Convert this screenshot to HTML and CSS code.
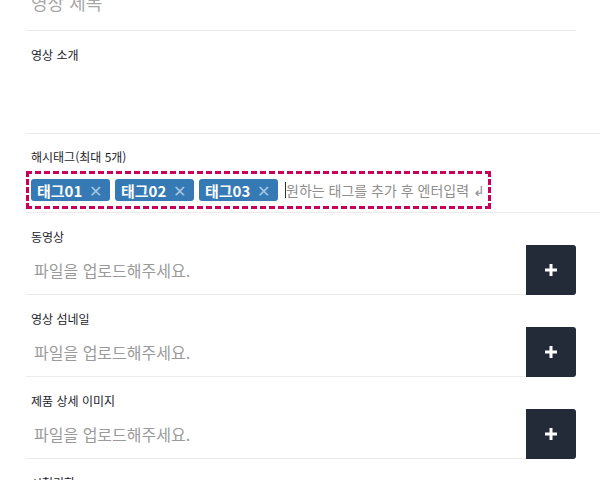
FILE: index.html
```html
<!DOCTYPE html>
<html lang="ko">
<head>
  <meta charset="UTF-8" />
  <title>영상 등록</title>
  <link rel="stylesheet" href="styles.css">
</head>
<body>
  <div class="form">
    <div class="title-row">
      <input type="text" class="title-input" placeholder="영상 제목" />
    </div>

    <div class="section desc">
      <label class="field-label">영상 소개</label>
      <textarea class="desc-input"></textarea>
    </div>

    <div class="section tags">
      <label class="field-label">해시태그(최대 5개)</label>
      <div class="tag-box">
        <span class="tag">태그01 <span class="tag-x">✕</span></span>
        <span class="tag">태그02 <span class="tag-x">✕</span></span>
        <span class="tag">태그03 <span class="tag-x">✕</span></span>
        <span class="caret"></span>
        <span class="tag-placeholder">원하는 태그를 추가 후 엔터입력 ↲</span>
      </div>
    </div>

    <div class="section upload">
      <label class="field-label">동영상</label>
      <div class="upload-row">
        <div class="upload-input">파일을 업로드해주세요.</div>
        <a href="#" class="upload-btn"><svg width="12" height="12" viewBox="0 0 12 12"><path d="M6 0v12M0 6h12" stroke="#fff" stroke-width="3"/></svg></a>
      </div>
    </div>

    <div class="section upload">
      <label class="field-label">영상 섬네일</label>
      <div class="upload-row">
        <div class="upload-input">파일을 업로드해주세요.</div>
        <a href="#" class="upload-btn"><svg width="12" height="12" viewBox="0 0 12 12"><path d="M6 0v12M0 6h12" stroke="#fff" stroke-width="3"/></svg></a>
      </div>
    </div>

    <div class="section upload">
      <label class="field-label">제품 상세 이미지</label>
      <div class="upload-row">
        <div class="upload-input">파일을 업로드해주세요.</div>
        <a href="#" class="upload-btn"><svg width="12" height="12" viewBox="0 0 12 12"><path d="M6 0v12M0 6h12" stroke="#fff" stroke-width="3"/></svg></a>
      </div>
    </div>

    <div class="section">
      <label class="field-label">시청기한</label>
    </div>
  </div>
</body>
</html>
```

FILE: styles.css
```css
html, body {
  margin: 0;
  padding: 0;
  background: #fff;
  font-family: "Noto Sans CJK KR", "Noto Sans", sans-serif;
  overflow: hidden;
}

.form {
  padding-left: 26px;
}

.title-row {
  margin-top: -14px;
  width: 550px;
  height: 45px;
  box-sizing: border-box;
  padding-top: 4px;
  border-bottom: 1px solid #ececec;
}

.title-input {
  border: 0;
  outline: none;
  padding: 0 0 0 5px;
  font-family: inherit;
  font-size: 18px;
  line-height: 24px;
  width: 400px;
}

.title-input::placeholder {
  color: #a8a8a8;
}

.section {
  padding-top: 16px;
}

.field-label {
  display: block;
  padding-left: 5px;
  font-size: 12px;
  line-height: 16px;
  color: #1d1d2b;
}

.desc {
  height: 103px;
  box-sizing: border-box;
  border-bottom: 1px solid #ececec;
}

.desc-input {
  display: block;
  border: 0;
  outline: none;
  resize: none;
  width: 500px;
  height: 60px;
}

.tags {
  padding-top: 15px;
  padding-bottom: 3px;
  border-bottom: 1px solid #ececec;
}

.tag-box {
  display: inline-flex;
  align-items: center;
  gap: 5px;
  margin-top: 6px;
  width: 465px;
  height: 38px;
  box-sizing: border-box;
  padding: 0 2px;
  border: 3px dashed #c8005c;
}

.tag {
  display: inline-flex;
  flex-shrink: 0;
  align-items: center;
  justify-content: space-between;
  width: 79px;
  box-sizing: border-box;
  height: 22px;
  padding: 0 8px 0 6px;
  border-radius: 3px;
  background: #357ab4;
  color: #fff;
  font-size: 15px;
  font-weight: bold;
}

.tag-x {
  color: #a9c6e0;
  font-weight: normal;
  font-size: 16px;
}

.caret {
  flex-shrink: 0;
  width: 1px;
  height: 16px;
  background: #333;
  margin-left: 2px;
  margin-right: -5px;
}

.tag-placeholder {
  white-space: nowrap;
  color: #8e8e8e;
  font-size: 14px;
}

.upload-row {
  display: flex;
  width: 550px;
  height: 50px;
}

.upload-input {
  flex: 1;
  display: flex;
  align-items: center;
  padding-left: 8px;
  border-bottom: 1px solid #ececec;
  color: #9a9a9a;
  font-size: 16px;
}

.upload-btn {
  display: flex;
  align-items: center;
  justify-content: center;
  width: 50px;
  height: 50px;
  background: #222b37;
  border-radius: 0 3px 3px 0;
}
```
